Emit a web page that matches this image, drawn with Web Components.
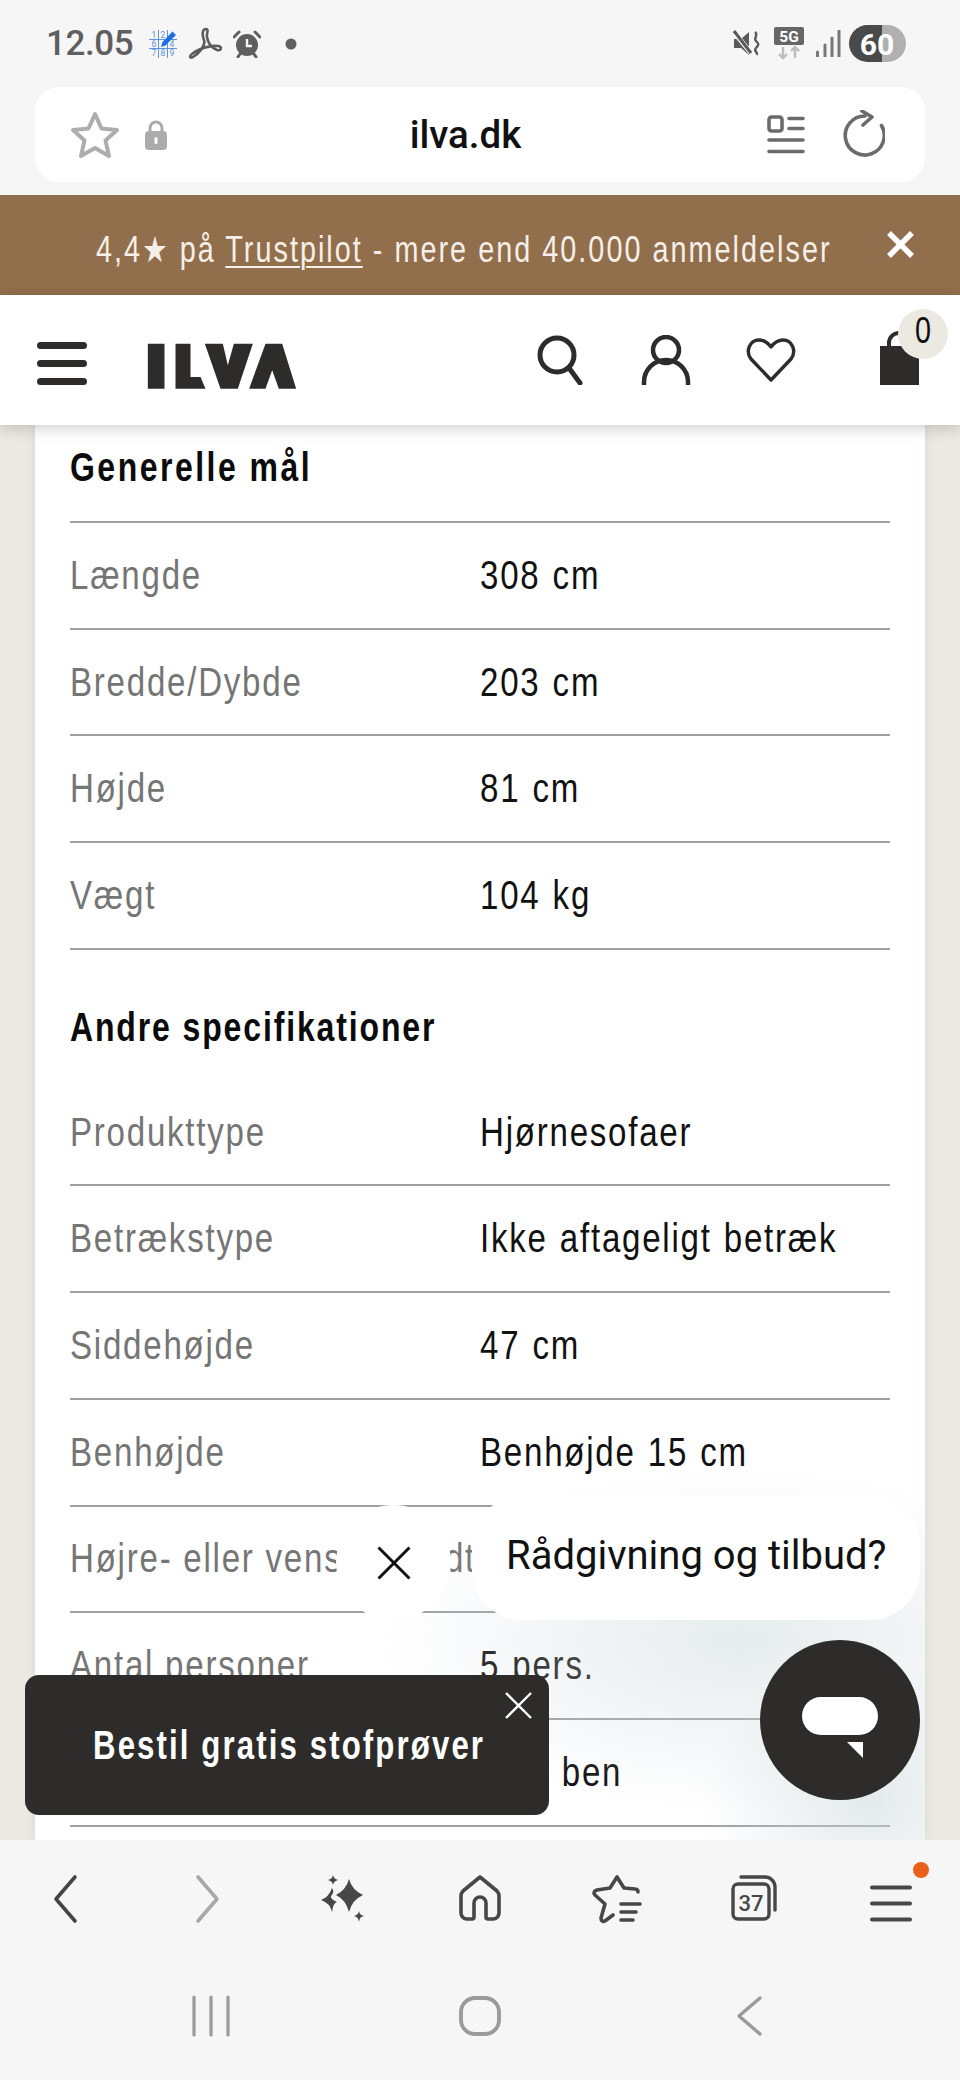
<!DOCTYPE html>
<html lang="da">
<head>
<meta charset="utf-8">
<title>ilva.dk</title>
<style>
  html, body { margin: 0; padding: 0; }
  body {
    width: 960px;
    height: 2080px;
    overflow: hidden;
    position: relative;
    display: flex;
    flex-direction: column;
    background: #f6f6f6;
    font-family: "Liberation Sans", Arial, sans-serif;
  }
</style>
</head>
<body>
  <status-bar></status-bar>
  <url-bar></url-bar>
  <promo-banner></promo-banner>
  <site-header></site-header>
  <spec-page>
    <spec-heading style="height:98px;padding-bottom:11px;border-bottom:2px solid #a0a0a0;--ls:3.200px">Generelle mål</spec-heading>
    <spec-row><span slot="label">Længde</span>308 cm</spec-row>
    <spec-row><span slot="label">Bredde/Dybde</span>203 cm</spec-row>
    <spec-row><span slot="label">Højde</span>81 cm</spec-row>
    <spec-row><span slot="label">Vægt</span>104 kg</spec-row>
    <spec-heading style="height:130px;padding-top:25px;--ls:2.400px">Andre specifikationer</spec-heading>
    <spec-row><span slot="label">Produkttype</span>Hjørnesofaer</spec-row>
    <spec-row><span slot="label">Betrækstype</span>Ikke aftageligt betræk</spec-row>
    <spec-row><span slot="label">Siddehøjde</span>47 cm</spec-row>
    <spec-row><span slot="label">Benhøjde</span>Benhøjde 15 cm</spec-row>
    <spec-row><span slot="label">Højre- eller venstrevendt</span></spec-row>
    <spec-row><span slot="label">Antal personer</span>5 pers.</spec-row>
    <spec-row>Med ben</spec-row>
  </spec-page>
  <browser-nav></browser-nav>
  <chat-widget></chat-widget>
  <promo-toast>Bestil gratis stofprøver</promo-toast>

<script>
// statuslinjen øverst
class StatusBar extends HTMLElement {
  constructor() {
    super();
    const shadow = this.attachShadow({ mode: 'open' });
    shadow.innerHTML = `
      <style>
        :host { display: flex; align-items: center; height: 87px; padding: 0 54px 0 46px; box-sizing: border-box; background: #f6f6f6; }
        .time { font: 500 35px Roboto, sans-serif; color: #5f5f5f; width: 103px; letter-spacing: -.4px; }
        svg { display: block; flex: none; }
        .left { display: flex; align-items: center; gap: 11px; }
        .right { margin-left: auto; display: flex; align-items: center; }
      </style>
      <span class="time">12.05</span>
      <div class="left">
        <svg width="28" height="28" viewBox="0 0 28 28">
          <g stroke="#5f93dc" stroke-width="1" fill="none"><path d="M9.5 0v28M18.5 0v28M0 9.5h28M0 18.5h28"/></g>
          <g font-family="Roboto, sans-serif" font-size="8.5" fill="#5f93dc" text-anchor="middle">
            <text x="5" y="8">1</text><text x="14" y="8">2</text><text x="5" y="17">6</text><text x="23" y="17">4</text><text x="5" y="26">7</text><text x="14" y="26">8</text><text x="23" y="26">9</text>
          </g>
          <path d="M12 17l1.5-5L23.500 1.500l3.500 3.500L16.500 15.500z" fill="#1f6ee0"/>
        </svg>
        <svg width="34" height="33" viewBox="0 0 34 33"><path d="M18 2C14 2 14 8 16 13 18 19 10 27 5 30 2 32 1 29 4 27 10 22 22 18 30 19 35 20 33 24 29 23 24 21 20 16 19 10 18.500 6 21 2 18 2Z" fill="none" stroke="#5c5c5c" stroke-width="2.600" stroke-linejoin="round"/></svg>
        <svg width="28" height="28" viewBox="0 0 28 28">
          <circle cx="14" cy="15" r="11" fill="#5f5f5f"/>
          <path d="M1 7l5-5M27 7l-5-5" stroke="#5f5f5f" stroke-width="3" stroke-linecap="round"/>
          <path d="M7 24l-2 3M21 24l2 3" stroke="#5f5f5f" stroke-width="3" stroke-linecap="round"/>
          <path d="M14 9v7h5" fill="none" stroke="#f6f6f6" stroke-width="2.400"/>
        </svg>
        <svg width="12" height="12" viewBox="0 0 12 12" style="margin-left:13px"><circle cx="6" cy="6" r="5.500" fill="#5f5f5f"/></svg>
      </div>
      <div class="right">
        <svg width="28" height="27" viewBox="0 0 28 27">
          <path d="M1 9h5l2 0 8-7v23l-8-7H1z" fill="#5a5a5a"/>
          <path d="M1 2l17 21" stroke="#f6f6f6" stroke-width="5"/><path d="M1 1l17 22" stroke="#5a5a5a" stroke-width="3"/>
          <path d="M22 2c4 3-2 6 1 9s3 4 0 7 2 4 1 7" fill="none" stroke="#5a5a5a" stroke-width="2.400"/>
        </svg>
        <svg width="30" height="33" viewBox="0 0 30 33" style="margin-left:13px">
          <rect x="0" y="0" width="30" height="18" rx="2" fill="#666"/>
          <text x="15" y="15" text-anchor="middle" font-family="Roboto, sans-serif" font-weight="700" font-size="15.500" fill="#fff">5G</text>
          <path d="M9 20v11M5 27l4 4 4-4M21 31V20M17 24l4-4 4 4" fill="none" stroke="#bcbcbc" stroke-width="2.400"/>
        </svg>
        <svg width="26" height="27" viewBox="0 0 26 27" style="margin-left:11px">
          <path d="M2.500 22v4M10 15v11M17 8v18M24 1v25" stroke="#777" stroke-width="3" stroke-linecap="round"/>
        </svg>
        <svg width="57" height="37" viewBox="0 0 57 37" style="margin-left:8px">
          <path d="M33 0H18.500a18.500 18.500 0 0 0 0 37H33z" fill="#4a4a4a"/>
          <path d="M33 0h5.500a18.500 18.500 0 0 1 0 37H33z" fill="#b0b0b0"/>
          <text x="28" y="29.500" text-anchor="middle" font-family="Roboto, sans-serif" font-weight="700" font-size="30" fill="#fff">60</text>
        </svg>
      </div>
    `;
  }
}
customElements.define('status-bar', StatusBar);

// adresselinjen i browseren
class UrlBar extends HTMLElement {
  constructor() {
    super();
    const shadow = this.attachShadow({ mode: 'open' });
    shadow.innerHTML = `
      <style>
        :host { display: block; height: 108px; padding: 0 35px; box-sizing: border-box; background: #f6f6f6; }
        .bar { height: 95px; background: #fff; border-radius: 24px; display: flex; align-items: center; padding: 0 40px 0 35px; position: relative; }
        .url { flex: 1; text-align: center; font: 500 38.5px Roboto, sans-serif; color: #111; padding-right: 4px; }
        svg { display: block; flex: none; }
      </style>
      <div class="bar">
        <svg width="50" height="48" viewBox="0 0 50 48"><path d="M25 3l6.500 14.500L47 19 35.500 29.500 39 45 25 37 11 45l3.500-15.500L3 19l15.500-1.500z" fill="none" stroke="#adadad" stroke-width="4" stroke-linejoin="round"/></svg>
        <svg width="24" height="31" viewBox="0 0 24 31" style="margin-left:24px">
          <path d="M6 14V9a6 6 0 0 1 12 0v5" fill="none" stroke="#ababab" stroke-width="3"/>
          <rect x="1" y="12" width="22" height="19" rx="4" fill="#ababab"/>
          <rect x="10.500" y="18" width="3" height="7" rx="1.500" fill="#fff"/>
        </svg>
        <span class="url">ilva.dk</span>
        <svg width="38" height="39" viewBox="0 0 38 39">
          <rect x="2" y="2" width="13" height="14" rx="2.500" fill="none" stroke="#6b6b6b" stroke-width="3.600"/>
          <path d="M22 3.500h14M22 13.500h14M2 25h34M2 36.500h34" stroke="#6b6b6b" stroke-width="3.600" stroke-linecap="round"/>
        </svg>
        <svg width="42" height="50" viewBox="0 0 42 50" style="margin-left:38px">
          <path d="M38.500 15.500A19.500 19.500 0 1 1 22 6" fill="none" stroke="#6b6b6b" stroke-width="3.600" stroke-linecap="round"/>
          <path d="M19 1l10 6-9 8" fill="none" stroke="#6b6b6b" stroke-width="3.600" stroke-linecap="round" stroke-linejoin="round"/>
        </svg>
      </div>
    `;
  }
}
customElements.define('url-bar', UrlBar);

// brunt banner med trustpilot
class PromoBanner extends HTMLElement {
  constructor() {
    super();
    const shadow = this.attachShadow({ mode: 'open' });
    shadow.innerHTML = `
      <style>
        :host { display: flex; align-items: center; height: 100px; background: #926f4c; color: #f6efe9; padding: 10px 0 0 96px; box-sizing: border-box; position: relative; overflow: hidden; }
        .txt { display: inline-block; font-size: 36px; letter-spacing: 2.520px; white-space: nowrap; transform: scaleX(.8); transform-origin: 0 50%; }
        a { color: inherit; text-decoration: underline; text-underline-offset: 4px; text-decoration-thickness: 2px; }
        svg { position: absolute; left: 886px; top: 36px; }
      </style>
      <span class="txt">4,4★ på <a>Trustpilot</a> - mere end 40.000 anmeldelser</span>
      <svg width="29" height="27" viewBox="0 0 29 27"><path d="M3 2l23 23M26 2L3 25" stroke="#fff" stroke-width="5.500"/></svg>
    `;
  }
}
customElements.define('promo-banner', PromoBanner);

// sidehoved med logo og ikoner
class SiteHeader extends HTMLElement {
  constructor() {
    super();
    const shadow = this.attachShadow({ mode: 'open' });
    shadow.innerHTML = `
      <style>
        :host { display: flex; align-items: flex-start; height: 130px; background: #fff; box-shadow: 0 3px 14px rgba(0,0,0,.2); position: relative; z-index: 2; padding: 0 0 0 37px; box-sizing: border-box; }
        svg { display: block; flex: none; }
        .burger { margin-top: 47px; }
        .logo { margin: 48px 0 0 60px; }
        .icons { margin-left: auto; display: flex; align-items: flex-start; position: relative; width: 426px; }
        .badge { position: absolute; left: 364px; top: 14px; width: 50px; height: 50px; border-radius: 50%; background: #ece9e2; color: #111; font-size: 36px; line-height: 44px; text-align: center; }
        .badge span { display: inline-block; transform: scaleX(.8); }
      </style>
      <svg class="burger" width="50" height="43" viewBox="0 0 50 43">
        <path d="M3.500 3.500h43M3.500 21.500h43M3.500 39.500h43" stroke="#2d2c2a" stroke-width="7" stroke-linecap="round"/>
      </svg>
      <svg class="logo" width="150" height="46" viewBox="380 68 449 138">
        <path fill="#2d2c2a" d="M382 70h50v135h-50zM465 70h45v100h30l15 35h-90zM553 70h54l15 65 18-65h57l-45 135h-52zM735 70h50l42 135h-52l-20-55-20 55h-49z"/>
      </svg>
      <div class="icons">
        <svg width="46" height="50" viewBox="0 0 46 50" style="margin:40px 0 0 3px">
          <circle cx="20" cy="20" r="17" fill="none" stroke="#2d2c2a" stroke-width="5"/>
          <path d="M32 33l11 15" stroke="#2d2c2a" stroke-width="5" stroke-linecap="round"/>
        </svg>
        <svg width="50" height="50" viewBox="0 0 50 50" style="margin:40px 0 0 58px">
          <circle cx="25" cy="15" r="13" fill="none" stroke="#2d2c2a" stroke-width="4.500"/>
          <path d="M3 50v-3a22 22 0 0 1 44 0v3" fill="none" stroke="#2d2c2a" stroke-width="4.500"/>
        </svg>
        <svg width="50" height="46" viewBox="0 0 50 46" style="margin:42px 0 0 55px">
          <path d="M25 43L5 22C-1 14 4 3 13 3c5 0 9 3 12 7 3-4 7-7 12-7 9 0 14 11 8 19z" fill="none" stroke="#2d2c2a" stroke-width="3.400" stroke-linejoin="round"/>
        </svg>
        <svg width="39" height="54" viewBox="0 0 39 54" style="margin:36px 0 0 84px">
          <path d="M9 17V12a10 10 0 0 1 20 0v5" fill="none" stroke="#2d2c2a" stroke-width="4"/>
          <rect x="0" y="15" width="39" height="39" fill="#2d2c2a"/>
        </svg>
        <span class="badge"><span>0</span></span>
      </div>
    `;
  }
}
customElements.define('site-header', SiteHeader);

// hvidt kort med specifikationer
class SpecPage extends HTMLElement {
  constructor() {
    super();
    const shadow = this.attachShadow({ mode: 'open' });
    shadow.innerHTML = `
      <style>
        :host { display: block; flex: 1; min-height: 0; overflow: hidden; background: #ece9e2; padding: 0 35px; }
        .card { background: #fff; padding: 0 35px; height: 100%; box-shadow: 0 0 10px rgba(0,0,0,.08); }
      </style>
      <div class="card"><slot></slot></div>
    `;
  }
}
customElements.define('spec-page', SpecPage);

class SpecHeading extends HTMLElement {
  constructor() {
    super();
    const shadow = this.attachShadow({ mode: 'open' });
    shadow.innerHTML = `
      <style>
        :host { display: flex; align-items: center; box-sizing: border-box; color: #0b0b0b; font-size: 41px; font-weight: 700; white-space: nowrap; }
        span { display: inline-block; letter-spacing: var(--ls, 2.500px); transform: scaleX(.78); transform-origin: 0 50%; }
      </style>
      <span><slot></slot></span>
    `;
  }
}
customElements.define('spec-heading', SpecHeading);

class SpecRow extends HTMLElement {
  constructor() {
    super();
    const shadow = this.attachShadow({ mode: 'open' });
    shadow.innerHTML = `
      <style>
        :host { display: grid; grid-template-columns: 410px 1fr; align-items: center; height: 106.7px; box-sizing: border-box; border-bottom: 2px solid #a0a0a0; font-size: 41px; white-space: nowrap; }
        div { display: inline-block; letter-spacing: 2.170px; transform: scaleX(.807); transform-origin: 0 50%; }
        .k { color: #757575; }
        .v { color: #111; word-spacing: 1.500px; }
      </style>
      <div class="k"><slot name="label"></slot></div>
      <div class="v"><slot></slot></div>
    `;
  }
}
customElements.define('spec-row', SpecRow);

// browserens bundlinje og systemknapper
class BrowserNav extends HTMLElement {
  constructor() {
    super();
    const shadow = this.attachShadow({ mode: 'open' });
    shadow.innerHTML = `
      <style>
        :host { display: block; height: 240px; background: #f6f6f6; position: relative; z-index: 3; }
        .tools { display: grid; grid-template-columns: repeat(7, 137px); height: 120px; padding-top: 35px; box-sizing: border-box; justify-items: center; align-items: start; }
        .sys { display: grid; grid-template-columns: repeat(3, 269px); padding: 36px 0 0 76px; justify-items: center; }
        svg { display: block; overflow: visible; }
      </style>
      <div class="tools">
        <svg width="24" height="48" viewBox="0 0 24 48" style="margin-left:-7px"><path d="M22 2L3 24l19 22" fill="none" stroke="#444" stroke-width="3.600" stroke-linecap="round" stroke-linejoin="round"/></svg>
        <svg width="24" height="48" viewBox="0 0 24 48" style="margin-left:4px"><path d="M2 2l19 22L2 46" fill="none" stroke="#a8a8a8" stroke-width="3.600" stroke-linecap="round" stroke-linejoin="round"/></svg>
        <svg width="44" height="48" viewBox="0 0 44 48" fill="#474747">
          <path d="M28 4Q31 15 42 20 31 25 28 37 25 25 15 20 25 15 28 4z"/>
          <path d="M12 0c.7 3 2 4 5 5-3 1-4.300 2-5 5-.7-3-2-4-5-5 3-1 4.300-2 5-5z"/>
          <path d="M11 13Q14 17 10 21 9 24 16 27 12 28 11 37 9 28 0 25 8 22 11 13z"/>
          <path d="M38 36c.7 3 1.500 4 5 5-3.500 1-4.300 2-5 6-.7-4-2-5-5-6 3-1 4.300-2 5-5z"/>
        </svg>
        <svg width="42" height="46" viewBox="0 0 42 46"><path d="M21 2L4 16c-1.500 1.500-2 3-2 5v17a6 6 0 0 0 6 6h5c1.500 0 2-1 2-2V28a6 6 0 0 1 12 0v14c0 1 .5 2 2 2h5a6 6 0 0 0 6-6V21c0-2-.5-3.500-2-5z" fill="none" stroke="#474747" stroke-width="3.600" stroke-linejoin="round"/></svg>
        <svg width="48" height="47" viewBox="0 0 48 47">
          <path d="M45 17c0-2-1-3-3-3l-11-1L24 2l-7 11-13 2c-3 1-4 3-2 5l10 9-4 14c0 3 2 4 4 3l8-6" fill="none" stroke="#474747" stroke-width="3.600" stroke-linecap="round" stroke-linejoin="round"/>
          <path d="M28 29h19M28 37h15M28 45h12" stroke="#474747" stroke-width="3.600" stroke-linecap="round"/>
        </svg>
        <svg width="46" height="46" viewBox="0 0 46 46">
          <rect x="2" y="9" width="36" height="35" rx="5" fill="none" stroke="#474747" stroke-width="3.400"/>
          <path d="M10 2h24a10 10 0 0 1 10 10v23" fill="none" stroke="#474747" stroke-width="3.400" stroke-linecap="round"/>
          <text x="20" y="36" text-anchor="middle" font-family="Roboto, sans-serif" font-size="22" font-weight="500" fill="#474747">37</text>
        </svg>
        <div style="position:relative">
          <svg width="40" height="37" viewBox="0 0 40 37" style="margin-top:10px"><path d="M1 2.500h38M1 18.500h38M1 34.500h38" stroke="#474747" stroke-width="4" stroke-linecap="round"/></svg>
          <svg width="16" height="16" viewBox="0 0 16 16" style="position:absolute;left:42px;top:-13px"><circle cx="8" cy="8" r="8" fill="#e8601c"/></svg>
        </div>
      </div>
      <div class="sys">
        <svg width="38" height="40" viewBox="0 0 38 40"><path d="M2 1v38M19 1v38M36 1v38" stroke="#9a9a9a" stroke-width="3.200" stroke-linecap="round"/></svg>
        <svg width="42" height="40" viewBox="0 0 42 40"><rect x="2" y="2" width="38" height="36" rx="14" fill="none" stroke="#9a9a9a" stroke-width="3.800"/></svg>
        <svg width="26" height="40" viewBox="0 0 26 40"><path d="M24 2L3 20l21 18" fill="none" stroke="#9a9a9a" stroke-width="3.400" stroke-linecap="round" stroke-linejoin="round"/></svg>
      </div>
    `;
  }
}
customElements.define('browser-nav', BrowserNav);

// chat-knap med boble, ligger over indholdet
class ChatWidget extends HTMLElement {
  constructor() {
    super();
    const shadow = this.attachShadow({ mode: 'open' });
    shadow.innerHTML = `
      <style>
        :host { position: absolute; left: 300px; top: 1470px; width: 625px; height: 370px; overflow: hidden; z-index: 1;
          background:
            radial-gradient(ellipse 360px 170px at 440px 170px, rgba(205,216,219,.5), rgba(205,216,219,0) 100%),
            radial-gradient(ellipse 170px 140px at 570px 330px, rgba(205,216,219,.55), rgba(205,216,219,0) 100%); }
        .close { position: absolute; left: 36px; top: 35px; width: 115px; height: 115px; border-radius: 50%; background: #fff; display: flex; align-items: center; justify-content: center; }
        .bubble { position: absolute; left: 172px; top: 26px; width: 448px; height: 124px; border-radius: 50px; background: #fff; color: #111; font: 400 40px Roboto, sans-serif; white-space: nowrap; padding: 36px 0 0 34px; box-sizing: border-box; }
        .btn { position: absolute; left: 460px; top: 170px; width: 160px; height: 160px; border-radius: 50%; background: #2d2c2a; }
        .pill { position: absolute; left: 42px; top: 57px; width: 76px; height: 38px; border-radius: 19px; background: #fff; }
        svg { display: block; }
        .tail { position: absolute; left: 87px; top: 102px; }
      </style>
      <div class="close"><svg width="34" height="34" viewBox="0 0 34 34"><path d="M1.500 1.500l31 31M32.500 1.500l-31 31" stroke="#111" stroke-width="3"/></svg></div>
      <div class="bubble">Rådgivning og tilbud?</div>
      <div class="btn">
        <div class="pill"></div>
        <svg class="tail" width="16" height="16" viewBox="0 0 16 16"><path d="M0 0h16v16z" fill="#fff"/></svg>
      </div>
    `;
  }
}
customElements.define('chat-widget', ChatWidget);

// mørk boks nederst til venstre
class PromoToast extends HTMLElement {
  constructor() {
    super();
    const shadow = this.attachShadow({ mode: 'open' });
    shadow.innerHTML = `
      <style>
        :host { position: absolute; left: 25px; top: 1675px; width: 524px; height: 140px; border-radius: 14px; background: #2d2c2a; color: #fff; font-size: 40px; font-weight: 700; display: flex; align-items: center; padding: 0 0 0 68px; box-sizing: border-box; white-space: nowrap; z-index: 2; overflow: hidden; }
        span { display: inline-block; letter-spacing: 2.700px; transform: scaleX(.78); transform-origin: 0 50%; }
        svg { position: absolute; left: 480px; top: 17px; }
      </style>
      <span><slot></slot></span>
      <svg width="27" height="27" viewBox="0 0 27 27"><path d="M1 1l25 25M26 1L1 26" stroke="#fff" stroke-width="2.400"/></svg>
    `;
  }
}
customElements.define('promo-toast', PromoToast);
</script>
</body>
</html>
